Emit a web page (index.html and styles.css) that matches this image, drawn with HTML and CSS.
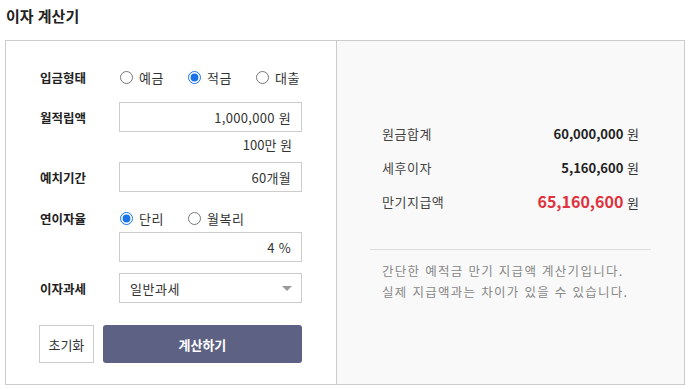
FILE: index.html
```html
<!DOCTYPE html>
<html lang="ko">
<head>
    <meta charset="UTF-8">
    <title>이자 계산기</title>
    <link rel="stylesheet" href="styles.css">
</head>
<body>
<h1 class="title">이자 계산기</h1>
<div class="calc">
    <div class="form">
        <div class="row row-type">
            <span class="label">입금형태</span>
            <label class="radio"><input type="radio" name="type"> 예금</label>
            <label class="radio"><input type="radio" name="type" checked> 적금</label>
            <label class="radio"><input type="radio" name="type"> 대출</label>
        </div>
        <div class="row row-amount">
            <span class="label">월적립액</span>
            <div class="field"><input class="text" type="text" value="1,000,000 원"></div>
        </div>
        <div class="hint">100만 원</div>
        <div class="row row-period">
            <span class="label">예치기간</span>
            <div class="field"><input class="text" type="text" value="60개월"></div>
        </div>
        <div class="row row-rate">
            <span class="label">연이자율</span>
            <label class="radio"><input type="radio" name="rate" checked> 단리</label>
            <label class="radio"><input type="radio" name="rate"> 월복리</label>
        </div>
        <div class="row row-rate-value">
            <span class="label"></span>
            <div class="field"><input class="text" type="text" value="4 %"></div>
        </div>
        <div class="row row-tax">
            <span class="label">이자과세</span>
            <div class="field select">
                <select>
                    <option>일반과세</option>
                    <option>비과세</option>
                    <option>세금우대</option>
                </select>
            </div>
        </div>
        <div class="buttons">
            <button class="btn-reset">초기화</button>
            <button class="btn-calc">계산하기</button>
        </div>
    </div>
    <div class="result">
        <ul class="sum">
            <li><span>원금합계</span><em><b>60,000,000</b> 원</em></li>
            <li><span>세후이자</span><em><b>5,160,600</b> 원</em></li>
            <li class="total"><span>만기지급액</span><em><b>65,160,600</b> 원</em></li>
        </ul>
        <p class="notice">간단한 예적금 만기 지급액 계산기입니다.<br>실제 지급액과는 차이가 있을 수 있습니다.</p>
    </div>
</div>
</body>
</html>
```

FILE: styles.css
```css
* {
    margin: 0;
    padding: 0;
    box-sizing: border-box;
}

body {
    padding: 0 5px;
    font-family: "Noto Sans CJK KR", "Noto Sans", sans-serif;
    font-size: 13px;
    color: #222;
    background: #fff;
}

.title {
    padding: 5px 1px 0;
    height: 40px;
    font-size: 15px;
    font-weight: bold;
    line-height: 22px;
}

.calc {
    display: flex;
    height: 345px;
    border: 1px solid #ccc;
}

/* left: input form */
.form {
    width: 331px;
    padding: 26px 34px 0 34px;
    border-right: 1px solid #ccc;
}

.row {
    display: flex;
    align-items: center;
}

.label {
    width: 79px;
    flex-shrink: 0;
    font-size: 12.5px;
    font-weight: bold;
    color: #222;
}

.radio {
    display: flex;
    align-items: center;
    flex-shrink: 0;
    width: 68px;
    height: 20px;
    color: #333;
    letter-spacing: 0.5px;
}

.radio:last-child {
    width: auto;
}

.radio input {
    width: 13px;
    height: 13px;
    margin: 0 6px 0 1px;
    accent-color: #1a73e8;
}

.field {
    width: 185px;
    position: relative;
}

.text,
.field select {
    display: block;
    width: 100%;
    height: 30px;
    border: 1px solid #ccc;
    background: #fff;
    font-family: inherit;
    font-size: 13px;
    color: #333;
    outline: none;
}

.text {
    padding: 0 10px;
    text-align: right;
    letter-spacing: 0.3px;
}

.field select {
    appearance: none;
    padding: 0 10px;
    letter-spacing: 0.5px;
}

.select::after {
    content: "";
    position: absolute;
    right: 10px;
    top: 13px;
    border-top: 5px solid #999;
    border-left: 5px solid transparent;
    border-right: 5px solid transparent;
}

.row-amount {
    margin-top: 15px;
}

.hint {
    padding: 3px 10px 0 0;
    height: 30px;
    text-align: right;
    color: #333;
}

.row-rate {
    margin-top: 16px;
}

.row-rate-value {
    margin-top: 4px;
}

.row-tax {
    margin-top: 11px;
}

.buttons {
    display: flex;
    margin: 22px 0 0 -1px;
}

.buttons button {
    height: 38px;
    font-family: inherit;
    font-size: 13px;
    cursor: pointer;
}

.btn-reset {
    width: 55px;
    margin-right: 9px;
    border: 1px solid #ccc;
    background: #fff;
    color: #333;
}

.btn-calc {
    width: 200px;
    border: none;
    border-radius: 3px;
    background: #5d6184;
    color: #fff;
    font-weight: bold;
}

/* right: result */
.result {
    flex: 1;
    padding: 75px 33px 0;
    background: #f9f9f9;
}

.sum {
    list-style: none;
    padding: 0 12px 31px;
    border-bottom: 1px solid #ddd;
}

.sum li {
    display: flex;
    justify-content: space-between;
    align-items: center;
    height: 34px;
}

.sum span {
    color: #444;
    letter-spacing: 0.5px;
}

.sum em {
    font-style: normal;
    color: #333;
}

.sum b {
    font-weight: bold;
    color: #222;
}

.sum .total b {
    font-size: 16px;
    color: #e0323d;
}

.notice {
    padding: 10px 12px 0;
    font-size: 12.5px;
    line-height: 21px;
    color: #888;
    letter-spacing: 1.3px;
}
```
